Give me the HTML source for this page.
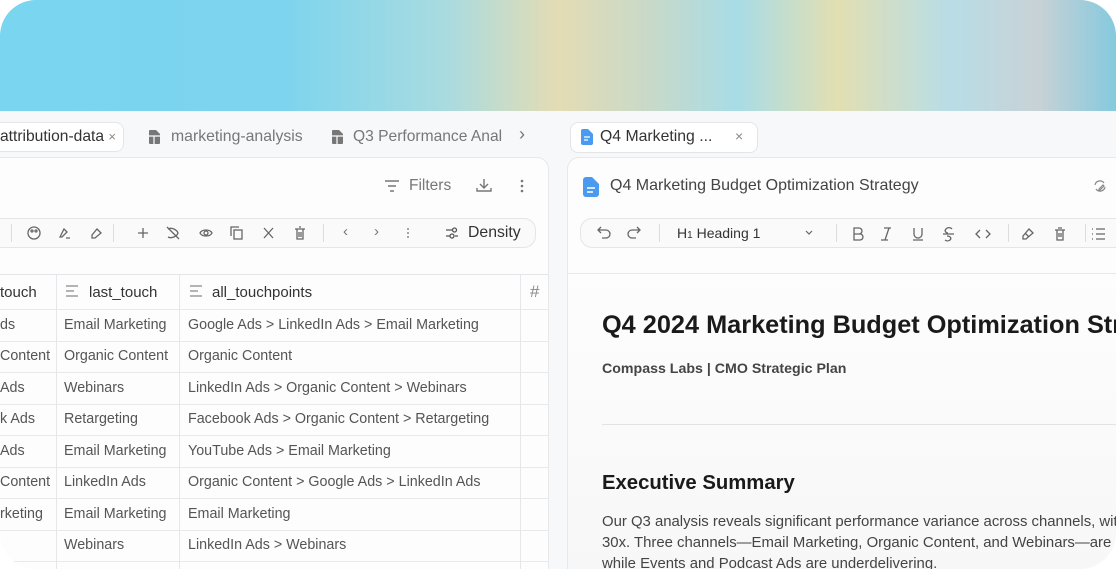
<!DOCTYPE html>
<html><head><meta charset="utf-8"><style>
*{box-sizing:border-box;margin:0;padding:0}
body{width:1116px;height:569px;background:#fff;font-family:"Liberation Sans",sans-serif;overflow:hidden;position:relative}
#wrap{position:absolute;left:0;top:0;width:1116px;height:569px;border-radius:36px;overflow:hidden;background:#f7f8f9}
#banner{position:absolute;left:0;top:0;width:1116px;height:111px;background:linear-gradient(90deg,#7ad5f0 0%,#7cd4ee 25%,#a9dbe0 40%,#e4dcb4 50%,#c9d9c8 58%,#a8dce6 66%,#e2dfb2 75%,#b8dde6 85%,#c8d2d6 93%,#86c9de 100%)}
.a{position:absolute;white-space:nowrap}
.card{position:absolute;background:#fdfdfd;border:1px solid #e6e8eb;border-radius:12px}
.pill{position:absolute;border:1px solid #e3e5e8;border-radius:12px;background:#fafafa}
.t{font-size:14.3px;color:#555}
.row{position:absolute;left:0;width:549px;height:32px;border-bottom:1px solid #e8e9eb}
.vl{position:absolute;top:275px;width:1px;height:294px;background:#e6e7e9}
</style></head><body><div id="wrap">
<div id="banner"></div>

<div class="a" style="left:-20px;top:122px;width:144px;height:30px;border:1px solid #e3e5e8;border-radius:8px;background:#fff"></div>
<div class="a" style="left:0;top:128px;font-size:15.6px;color:#333">attribution-data <span style="color:#888;font-size:13px">×</span></div>
<svg class="a" style="left:148px;top:129px" width="13" height="16"><path d="M1 2a1 1 0 0 1 1-1h6l4 4v9a1 1 0 0 1-1 1H2a1 1 0 0 1-1-1z" fill="#777"/><path d="M1 7h11M6 7v8" stroke="#fff" stroke-width="1.2"/></svg>
<div class="a" style="left:171px;top:128px;font-size:15.8px;color:#777">marketing-analysis</div>
<svg class="a" style="left:331px;top:129px" width="13" height="16"><path d="M1 2a1 1 0 0 1 1-1h6l4 4v9a1 1 0 0 1-1 1H2a1 1 0 0 1-1-1z" fill="#777"/><path d="M1 7h11M6 7v8" stroke="#fff" stroke-width="1.2"/></svg>
<div class="a" style="left:353px;top:128px;font-size:15.6px;color:#777">Q3 Performance Anal</div>
<div class="a" style="left:519px;top:124px;font-size:18px;color:#777">›</div>

<div class="card" style="left:-20px;top:157px;width:569px;height:430px;border-radius:12px"></div>
<svg class="a" style="left:384px;top:179px" width="16" height="14"><path d="M1 2h14M4 7h8M6 12h4" stroke="#777" stroke-width="1.4"/></svg>
<div class="a" style="left:409px;top:177px;font-size:15.5px;color:#777">Filters</div>
<svg class="a" style="left:476px;top:178px" width="16" height="15"><path d="M8 1v9M4 6l4 4 4-4M1 10v3h14v-3" stroke="#777" stroke-width="1.4" fill="none"/></svg>
<svg class="a" style="left:519px;top:179px" width="6" height="14"><circle cx="3" cy="2" r="1.3" fill="#777"/><circle cx="3" cy="7" r="1.3" fill="#777"/><circle cx="3" cy="12" r="1.3" fill="#777"/></svg>

<div class="pill" style="left:-20px;top:218px;width:556px;height:30px"></div>
<div class="a" style="left:11px;top:224px;width:1px;height:18px;background:#ddd"></div>
<div class="a" style="left:113px;top:224px;width:1px;height:18px;background:#ddd"></div>
<div class="a" style="left:323px;top:224px;width:1px;height:18px;background:#ddd"></div>
<svg class="a" style="left:26px;top:225px" width="300" height="16" fill="none" stroke="#666" stroke-width="1.3">
<circle cx="8" cy="8" r="6"/><circle cx="6" cy="6" r="1"/><circle cx="10" cy="6" r="1"/>
<path d="M34 12l4-8 3 3-5 5zM40 13h4"/>
<path d="M66 10l5-6 4 4-6 5h-3z"/>
<path d="M117 3v10M112 8h10"/>
<path d="M142 4c4-2 9 1 10 4-1 3-6 6-10 4M141 2l12 12"/>
<path d="M174 8c2-4 10-4 12 0-2 4-10 4-12 0z"/><circle cx="180" cy="8" r="2"/>
<rect x="208" y="5" width="8" height="9"/><path d="M205 11V2h8"/>
<path d="M238 3l9 10M247 3l-9 10"/>
<path d="M269 4h10M271 4v10h6V4M273 2h2M273 7v5M275 7v5"/>
</svg>
<div class="a" style="left:343px;top:223px;font-size:15px;color:#777">‹</div>
<div class="a" style="left:374px;top:223px;font-size:15px;color:#777">›</div>
<svg class="a" style="left:406px;top:227px" width="4" height="12"><circle cx="2" cy="2" r="1" fill="#888"/><circle cx="2" cy="6" r="1" fill="#888"/><circle cx="2" cy="10" r="1" fill="#888"/></svg>
<svg class="a" style="left:445px;top:226px" width="14" height="14" fill="none" stroke="#555" stroke-width="1.3"><path d="M1 4h6M10 10h3M1 10h4"/><circle cx="9.5" cy="4" r="2"/><circle cx="7" cy="10" r="2"/></svg>
<div class="a" style="left:468px;top:224px;font-size:15.8px;color:#333">Density</div>

<div class="a" style="left:0;top:274px;width:549px;height:1px;background:#e3e5e8"></div>
<div class="row" style="top:275px;height:35px;background:#fdfdfd"></div>
<div class="row" style="top:310px"></div><div class="row" style="top:341px"></div><div class="row" style="top:373px"></div><div class="row" style="top:404px"></div><div class="row" style="top:436px"></div><div class="row" style="top:467px"></div><div class="row" style="top:499px"></div><div class="row" style="top:530px"></div>
<div class="vl" style="left:56px"></div><div class="vl" style="left:179px"></div><div class="vl" style="left:520px"></div><div class="vl" style="left:548px"></div>
<div class="a t" style="left:0;top:284px;color:#333;font-size:15px">touch</div>
<svg class="a" style="left:65px;top:285px" width="14" height="12"><path d="M1 1h12M1 6h8M1 11h12" stroke="#888" stroke-width="1.2"/></svg>
<div class="a t" style="left:89px;top:284px;color:#333;font-size:15px">last_touch</div>
<svg class="a" style="left:189px;top:285px" width="14" height="12"><path d="M1 1h12M1 6h8M1 11h12" stroke="#888" stroke-width="1.2"/></svg>
<div class="a t" style="left:212px;top:284px;color:#333;font-size:15px">all_touchpoints</div>
<div class="a" style="left:530px;top:282px;font-size:17px;color:#888">#</div>

<div class="a t" style="left:0;top:317px">ds</div><div class="a t" style="left:64px;top:317px">Email Marketing</div><div class="a t" style="left:188px;top:317px">Google Ads &gt; LinkedIn Ads &gt; Email Marketing</div>
<div class="a t" style="left:0;top:348px">Content</div><div class="a t" style="left:64px;top:348px">Organic Content</div><div class="a t" style="left:188px;top:348px">Organic Content</div>
<div class="a t" style="left:0;top:380px">Ads</div><div class="a t" style="left:64px;top:380px">Webinars</div><div class="a t" style="left:188px;top:380px">LinkedIn Ads &gt; Organic Content &gt; Webinars</div>
<div class="a t" style="left:0;top:411px">k Ads</div><div class="a t" style="left:64px;top:411px">Retargeting</div><div class="a t" style="left:188px;top:411px">Facebook Ads &gt; Organic Content &gt; Retargeting</div>
<div class="a t" style="left:0;top:443px">Ads</div><div class="a t" style="left:64px;top:443px">Email Marketing</div><div class="a t" style="left:188px;top:443px">YouTube Ads &gt; Email Marketing</div>
<div class="a t" style="left:0;top:474px">Content</div><div class="a t" style="left:64px;top:474px">LinkedIn Ads</div><div class="a t" style="left:188px;top:474px">Organic Content &gt; Google Ads &gt; LinkedIn Ads</div>
<div class="a t" style="left:0;top:506px">rketing</div><div class="a t" style="left:64px;top:506px">Email Marketing</div><div class="a t" style="left:188px;top:506px">Email Marketing</div>
<div class="a t" style="left:64px;top:537px">Webinars</div><div class="a t" style="left:188px;top:537px">LinkedIn Ads &gt; Webinars</div>

<div class="a" style="left:570px;top:122px;width:188px;height:31px;border:1px solid #e3e5e8;border-radius:8px;background:#fff"></div>
<svg class="a" style="left:581px;top:129px" width="12" height="16"><path d="M0 2a2 2 0 0 1 2-2h5l5 5v9a2 2 0 0 1-2 2H2a2 2 0 0 1-2-2z" fill="#4a9af0"/><path d="M3 8h6M3 11h4" stroke="#fff" stroke-width="1.2"/></svg>
<div class="a" style="left:600px;top:128px;font-size:15.8px;color:#333">Q4 Marketing ...</div>
<div class="a" style="left:735px;top:128px;font-size:14px;color:#888">×</div>

<div class="card" style="left:567px;top:157px;width:570px;height:430px"></div>
<svg class="a" style="left:583px;top:177px" width="16" height="20"><path d="M0 3a3 3 0 0 1 3-3h6l7 7v10a3 3 0 0 1-3 3H3a3 3 0 0 1-3-3z" fill="#4a9af0"/><path d="M4 11h8M4 15h6" stroke="#fff" stroke-width="1.4"/></svg>
<div class="a" style="left:610px;top:177px;font-size:16px;color:#444">Q4 Marketing Budget Optimization Strategy</div>
<svg class="a" style="left:1093px;top:179px" width="14" height="14" fill="none" stroke="#888" stroke-width="1.2"><path d="M2 6a5 5 0 0 1 9-2M12 8a5 5 0 0 1-9 2"/><path d="M6 10l4-4 1 1-4 4H6z"/></svg>

<div class="pill" style="left:580px;top:218px;width:560px;height:30px"></div>
<svg class="a" style="left:596px;top:226px" width="520" height="16" fill="none" stroke="#666" stroke-width="1.3">
<path d="M2 4h8a4 4 0 0 1 0 8H6M5 1L2 4l3 3"/>
<path d="M44 4h-8a4 4 0 0 0 0 8h4M41 1l3 3-3 3"/>
<path d="M258 2h5a3 3 0 0 1 0 6h-5zM258 8h6a3 3 0 0 1 0 6h-6z"/>
<path d="M288 2h7M285 14h7M293 2l-4 12"/>
<path d="M318 2v6a4 4 0 0 0 8 0V2M317 14h10"/>
<path d="M356 3a4 4 0 0 0-6 0c-2 2 0 4 2 4M347 8h11M351 10c3 0 5 2 3 4a4 4 0 0 1-5 0"/>
<path d="M384 4l-4 4 4 4M390 4l4 4-4 4"/>
<path d="M427 10l6-7 4 4-7 6h-3zM429 7l4 4"/>
<path d="M459 4h10M461 4v10h6V4M462 2h4M463 7v4M465 7v4"/>
<path d="M500 3h9M500 8h9M500 13h9M496 3h1M496 8h1M496 13h1"/>
</svg>
<div class="a" style="left:659px;top:224px;width:1px;height:18px;background:#ddd"></div>
<div class="a" style="left:836px;top:224px;width:1px;height:18px;background:#ddd"></div>
<div class="a" style="left:1008px;top:224px;width:1px;height:18px;background:#ddd"></div>
<div class="a" style="left:1085px;top:224px;width:1px;height:18px;background:#ddd"></div>
<div class="a" style="left:677px;top:225px;font-size:14px;color:#333">H<span style="font-size:10px">1</span> Heading 1</div>
<svg class="a" style="left:805px;top:230px" width="8" height="6"><path d="M1 1l3 3 3-3" stroke="#666" fill="none" stroke-width="1.2"/></svg>
<div class="a" style="left:568px;top:273px;width:560px;height:1px;background:#e6e8eb"></div>
<div class="a" style="left:568px;top:274px;width:560px;height:300px;background:linear-gradient(180deg,#fdfdfd,#f7f7f8)"></div>

<div class="a" style="left:602px;top:311px;font-size:25.3px;font-weight:bold;color:#1a1a1a">Q4 2024 Marketing Budget Optimization Strategy</div>
<div class="a" style="left:602px;top:361px;font-size:14.2px;font-weight:bold;color:#444">Compass Labs | CMO Strategic Plan</div>
<div class="a" style="left:602px;top:424px;width:520px;height:1px;background:#e2e3e5"></div>
<div class="a" style="left:602px;top:472px;font-size:20.3px;font-weight:bold;color:#1a1a1a">Executive Summary</div>
<div class="a" style="left:602px;top:512px;font-size:14.9px;color:#444;line-height:21px">Our Q3 analysis reveals significant performance variance across channels, with<br>30x. Three channels—Email Marketing, Organic Content, and Webinars—are<br>while Events and Podcast Ads are underdelivering.</div>
</div></body></html>
